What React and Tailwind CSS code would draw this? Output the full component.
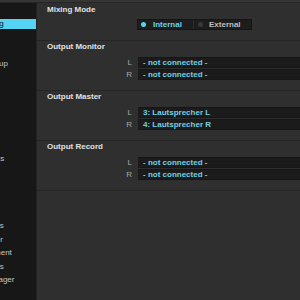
import React from "react";

const navItems = [
  "Audio Setup",
  "Output Routing",
  "MIDI Clock",
  "Loading",
  "Timecode Setup",
  "Transport",
  "Track Decks",
  "Remix Decks",
  "Mixer",
  "Effects",
  "Mix Recorder",
  "Global Settings",
  "Loops",
  "Layout",
  "Video",
  "Traktor",
  "Remix Settings",
  "Loop Recorder",
  "File Management",
  "Layout Options",
  "Mapping Manager",
  "Kontrol X1",
];

const sections = [
  {
    title: "Output Monitor",
    rows: [
      { ch: "L", value: "- not connected -" },
      { ch: "R", value: "- not connected -" },
    ],
  },
  {
    title: "Output Master",
    rows: [
      { ch: "L", value: "3: Lautsprecher L" },
      { ch: "R", value: "4: Lautsprecher R" },
    ],
  },
  {
    title: "Output Record",
    rows: [
      { ch: "L", value: "- not connected -" },
      { ch: "R", value: "- not connected -" },
    ],
  },
];

// list is scrolled sideways, only the label tails show
const SideBar = () => {
  return (
    <aside className="w-[37px] shrink-0 bg-[#171717] border-r border-[#222222] overflow-hidden pt-[2px]">
      <div className="flex flex-col gap-[3.5px]">
        {navItems.map((name) => {
          const isActive = name === "Output Routing";
          return (
            <div
              key={name}
              className={`h-[10px] w-full whitespace-nowrap text-[8px] leading-[10px] ${
                isActive ? "bg-[#55d3f2] text-[#111111]" : "text-[#c4c4c4]"
              }`}
            >
              <span className="block ml-[-50px]">{name}</span>
            </div>
          );
        })}
      </div>
    </aside>
  );
};

const Header = ({ children }) => (
  <div className="h-[12px] pl-[10px] text-[8px] leading-[12px] font-bold text-[#e2e2e2]">
    {children}
  </div>
);

export default function App() {
  return (
    <div className="w-[300px] h-[300px] flex flex-col overflow-hidden bg-[#2f2f2f] font-['Liberation_Sans',Arial,sans-serif]">
      {/* top strip */}
      <div className="h-[3px] shrink-0 bg-[#353535] border-b border-[#262626]" />

      <div className="flex flex-1 min-h-0">
        <SideBar />

        <main className="flex-1 min-w-0 flex flex-col">
          {/* Mixing Mode */}
          <section className="pt-[1px] pb-[10px] border-b border-[#262626]">
            <Header>Mixing Mode</Header>
            <div className="mt-[3px] ml-[100px] w-[115px] h-[11px] flex bg-[#1d1d1d] border border-[#151515] text-[8px] leading-[9px] font-bold">
              <div className="w-[56px] flex items-center pl-[3px] gap-[7px] border-r border-[#2c2c2c]">
                <span className="w-[5px] h-[5px] rounded-full bg-[#5ad3ee]" />
                <span className="text-[#6fd2e4]">Internal</span>
              </div>
              <div className="flex-1 flex items-center pl-[4px] gap-[6px]">
                <span className="w-[5px] h-[5px] rounded-full bg-[#3a3a3a]" />
                <span className="text-[#bdbdbd]">External</span>
              </div>
            </div>
          </section>

          {sections.map((sec) => (
            <section
              key={sec.title}
              className="pb-[10px] border-b border-[#262626]"
            >
              <Header>{sec.title}</Header>
              <div className="mt-[4px] flex flex-col gap-[1px]">
                {sec.rows.map((row) => (
                  <div key={row.ch} className="flex h-[11px] items-center">
                    <span className="w-[96px] pr-[1px] text-right text-[8px] leading-[11px] text-[#a8a8a8]">
                      {row.ch}
                    </span>
                    <div className="ml-[5px] flex-1 h-[11px] bg-[#1b1b1b] border-y border-[#161616] pl-[5px] text-[8px] leading-[9px] font-bold text-[#6fd2e4] whitespace-nowrap">
                      {row.value}
                    </div>
                  </div>
                ))}
              </div>
            </section>
          ))}
        </main>
      </div>
    </div>
  );
}
